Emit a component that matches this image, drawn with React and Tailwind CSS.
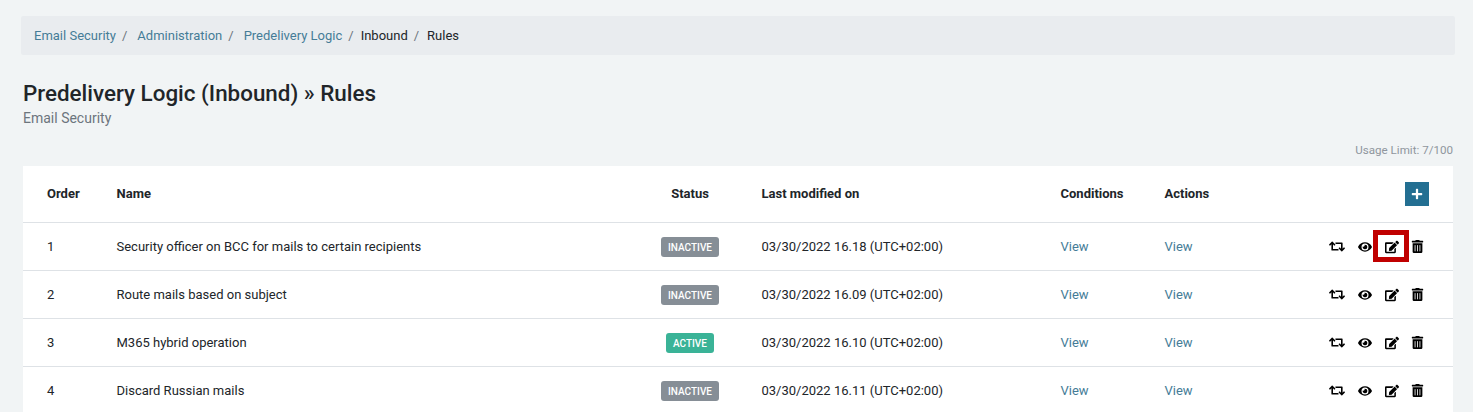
import React from 'react';
import { FaEdit, FaEye, FaPlus, FaRetweet, FaTrashAlt } from 'react-icons/fa';

const rules = [
  { order: 1, name: 'Security officer on BCC for mails to certain recipients', active: false, modified: '03/30/2022 16.18 (UTC+02:00)', highlight: true },
  { order: 2, name: 'Route mails based on subject', active: false, modified: '03/30/2022 16.09 (UTC+02:00)' },
  { order: 3, name: 'M365 hybrid operation', active: true, modified: '03/30/2022 16.10 (UTC+02:00)' },
  { order: 4, name: 'Discard Russian mails', active: false, modified: '03/30/2022 16.11 (UTC+02:00)' },
];

const crumbs = ['Email Security', 'Administration', 'Predelivery Logic'];

const RuleRow = ({ rule }) => (
  <div className="flex items-center h-12 border-t border-[#dee2e6] text-[13px] text-[#212529]">
    <div className="w-[93.5px] pl-6">{rule.order}</div>
    <div className="w-[523.5px]">{rule.name}</div>
    <div className="w-[100px] flex justify-center mt-px">
      <span
        className={`h-5 rounded-[3px] flex items-center justify-center text-[10px] font-medium text-white ${
          rule.active ? 'w-12 bg-[#3ab397]' : 'w-[58px] bg-[#868e96]'
        }`}
      >
        {rule.active ? 'ACTIVE' : 'INACTIVE'}
      </span>
    </div>
    <div className="w-[21.5px]" />
    <div className="w-[299px]">{rule.modified}</div>
    <div className="w-[104px] text-[#457c97]">View</div>
    <div className="w-[164.5px] text-[#457c97]">View</div>
    <div className="flex items-center text-black">
      <FaRetweet size={15} className="w-[16px]" />
      <FaEye size={14} className="ml-[13px]" />
      <div className="relative ml-[13px]">
        <FaEdit size={14} className="block" />
        {rule.highlight && (
          <span className="absolute -left-[12px] -top-[10px] w-[36px] h-[32px] border-[5px] border-[#c00000]" />
        )}
      </div>
      <FaTrashAlt size={13} className="ml-[12px]" />
    </div>
  </div>
);

export default function App() {
  return (
    <div className="h-[412px] overflow-hidden bg-[#f1f4f5] pt-4 font-['Roboto',sans-serif]">
      <nav className="ml-[21px] mr-[18px] h-[39px] px-[13px] flex items-center bg-[#e9ecef] text-[13px] text-[#457c97] rounded-[2px]">
        {crumbs.map((crumb) => (
          <React.Fragment key={crumb}>
            <span>{crumb}</span>
            <span className="text-[#6c757d] ml-[6px] mr-[10px]">/</span>
          </React.Fragment>
        ))}
        <span className="text-[#212529] -ml-[3px]">Inbound</span>
        <span className="text-[#6c757d] mx-[6px]">/</span>
        <span className="text-[#212529] ml-[2px]">Rules</span>
      </nav>

      <div className="ml-[23px] mr-[20px]">
        <h1 className="mt-[24px] text-[22.4px] leading-[29px] font-medium text-[#212529]">
          Predelivery Logic (Inbound) » Rules
        </h1>
        <p className="text-sm leading-[20px] text-[#6c757d]">Email Security</p>
        <div className="mt-[13px] h-[19px] text-right text-[11.6px] leading-[19px] text-[#8f969d]">Usage Limit: 7/100</div>

        <div className="mt-[6px] bg-white">
          <div className="flex items-center h-[56px] text-[13px] font-bold text-[#212529]">
            <div className="w-[93.5px] pl-6">Order</div>
            <div className="w-[523.5px]">Name</div>
            <div className="w-[100px] text-center">Status</div>
            <div className="w-[21.5px]" />
            <div className="w-[299px]">Last modified on</div>
            <div className="w-[104px]">Conditions</div>
            <div className="w-[240.5px]">Actions</div>
            <button className="w-6 h-6 flex items-center justify-center bg-[#236f92] text-white">
              <FaPlus size={12} />
            </button>
          </div>
          {rules.map((rule) => (
            <RuleRow key={rule.order} rule={rule} />
          ))}
        </div>
      </div>
    </div>
  );
}
